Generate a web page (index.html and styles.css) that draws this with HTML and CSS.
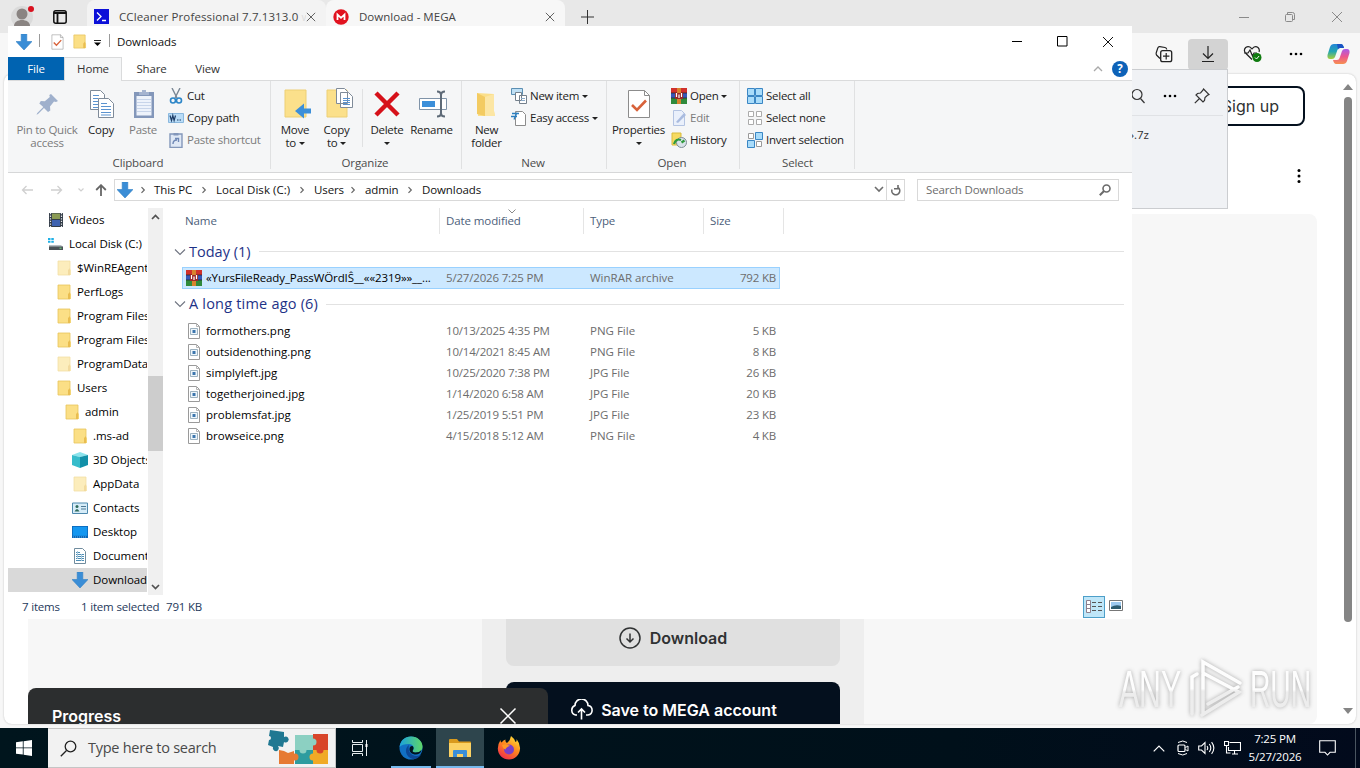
FILE: index.html
```
<!DOCTYPE html>
<html lang="en">
<head>
<meta charset="utf-8">
<title>Downloads</title>
<link rel="stylesheet" href="styles.css">
</head>
<body>

<!-- shared icons -->
<svg class="defs" width="0" height="0">
  <symbol id="folder" viewBox="0 0 16 16"><path d="M2 1h12v8l1 1v5H2z" fill="#fbdf86"/><path d="M2 1h12v14H2z" fill="none" stroke="#e8c45c" stroke-width=".8"/><path d="M12 15V10l2-2v7z" fill="#e9bd50"/></symbol>
  <symbol id="down" viewBox="0 0 16 16"><path d="M5.200 0h5.600v7.500H16L8 16 0 7.500h5.200z" fill="#3a8dd6"/><path d="M5.200 0h5.600v7.500H16L8 16 0 7.500h5.200z" fill="none" stroke="#2f7fc4" stroke-width=".6"/></symbol>
  <symbol id="rar" viewBox="0 0 16 16"><path d="M0 0h16v5H0z" fill="#d0312c"/><path d="M0 5h16v5H0z" fill="#3557b8"/><path d="M0 10h16v6H0z" fill="#2f8a3c"/><path d="M0 5h16M0 10h16" stroke="#222" stroke-width=".7"/><path d="M6 0h4v16H6z" fill="#d8842e"/><path d="M4 5h8v6H4z" fill="#9a2a2a"/><path d="M5.500 5v4M10.500 5v4M8 6.500V10" stroke="#fff" stroke-width="1.200"/></symbol>
  <symbol id="img" viewBox="0 0 12 16"><path d="M.5.5h8l3 3v12H.5z" fill="#fff" stroke="#9a9a9a"/><path d="M8.500.5v3h3" fill="none" stroke="#b5b5b5"/><path d="M2.500 5.500h7v6h-7z" fill="#eef6fb" stroke="#9db2c0"/><path d="M4.500 7h3v3h-3z" fill="#3c76ae"/></symbol>
  <symbol id="crumb" viewBox="0 0 6 8"><path d="M1.500 1.200 4.300 4 1.500 6.800" fill="none" stroke="#666" stroke-width="1.200"/></symbol>
  <symbol id="x" viewBox="0 0 12 12"><path d="M1 1l10 10M11 1 1 11" fill="none" stroke="currentColor"/></symbol>
  <symbol id="prop" viewBox="0 0 24 30"><path d="M1.500 1.500h16l5 5v22h-21z" fill="#fff" stroke="#8c8c8c"/><path d="M17.500 1.500v5h5" fill="none" stroke="#8c8c8c"/><path d="M5 16l5 5 9-9.500" fill="none" stroke="#d8623a" stroke-width="2.600"/></symbol>
  <symbol id="expand" viewBox="0 0 12 8"><path d="M1 1.500l5 5 5-5" fill="none" stroke="#6f7480" stroke-width="1.100"/></symbol>
</svg>

<div class="desktop">

  <div class="browser">
    <div class="tabstrip">
      <svg class="avatar" width="24" height="26"><circle cx="11" cy="17" r="11" fill="#dadada"/><circle cx="11" cy="14" r="5.500" fill="#8a8482"/><path d="M3 26c0-8 16-8 16 0z" fill="#8a8482"/><circle cx="20" cy="9" r="3" fill="#d9111f"/></svg>
      <svg class="panes" width="14" height="14"><rect x=".8" y=".8" width="12.400" height="12.400" rx="2" fill="none" stroke="#111" stroke-width="1.500"/><path d="M1 3h12M4.500 3v10" stroke="#111" stroke-width="1.800"/></svg>
      <div class="tab tab-back">
        <svg width="15" height="15"><path d="M0 0h15v15H0z" fill="#0c10d8"/><path d="M3 3.500l4 4-4 4M8 11.500h4" fill="none" stroke="#fff" stroke-width="1.300"/></svg>
        <span class="tab-title">CCleaner Professional 7.7.1313.0 <i>w</i></span>
        <svg class="tab-x" width="10" height="10"><use href="#x"/></svg>
      </div>
      <div class="tab">
        <svg width="16" height="16"><circle cx="8" cy="8" r="7.700" fill="#e1121f"/><path d="M4.500 11V5.500L8 8.800l3.500-3.300V11" fill="none" stroke="#fff" stroke-width="1.800"/></svg>
        <span class="tab-title">Download - MEGA</span>
        <svg class="tab-x" width="10" height="10"><use href="#x"/></svg>
      </div>
      <svg class="newtab" width="14" height="14"><path d="M6.500 0v14M0 7h13" stroke="#333"/></svg>
      <div class="wincontrols">
        <svg width="10" height="10"><path d="M0 5.500h10" stroke="#8a8a8a"/></svg>
        <svg width="10" height="10"><rect x=".5" y="2.500" width="7" height="7" rx="1" fill="none" stroke="#8a8a8a"/><path d="M2.500 2V.5h5q2 0 2 2v5H8" fill="none" stroke="#8a8a8a"/></svg>
        <svg class="grey" width="12" height="12"><use href="#x"/></svg>
      </div>
    </div>
    <div class="toolbar">
      <svg width="18" height="18"><path d="M5 13.500 1.500 10Q.8 9 1.300 7.500L2.800 3q.5-1.500 2-1.300L10 2.500q1.500.3 1.800 2" fill="none" stroke="#222" stroke-width="1.200"/><rect x="5.700" y="5.700" width="11" height="11" rx="2" fill="none" stroke="#222" stroke-width="1.300"/><path d="M11.200 8v6.400M8 11.200h6.400" stroke="#222" stroke-width="1.200"/></svg>
      <div class="dl-btn"><svg width="14" height="18"><path d="M7 1v12M2 8.500l5 5 5-5M1 16.500h12" fill="none" stroke="#222" stroke-width="1.200"/></svg></div>
      <svg width="20" height="18"><path d="M9 14.500 2.500 8q-2.300-3 .2-5.500 3-2 5.800.8l.5.500.5-.5q2.800-2.800 5.500-.8Q17 4.500 16 7M1 8h4l2-3 2.500 6L11 8h3" fill="none" stroke="#222" stroke-width="1.200"/><circle cx="14" cy="12.500" r="4.500" fill="#0f7b0f"/><path d="M12 12.500l1.500 1.500 2.600-3" fill="none" stroke="#fff"/></svg>
      <svg width="16" height="4"><circle cx="3" cy="2" r="1.300"/><circle cx="8" cy="2" r="1.300"/><circle cx="13" cy="2" r="1.300"/></svg>
      <svg class="copilot" width="23" height="20" viewBox="0 0 23 20">
        <defs><linearGradient id="cp1" x1="0" y1="0" x2="0" y2="1"><stop offset="0" stop-color="#2386d8"/><stop offset=".5" stop-color="#24a6b0"/><stop offset="1" stop-color="#a9cf3a"/></linearGradient><linearGradient id="cp2" x1="0" y1="0" x2="0" y2="1"><stop offset="0" stop-color="#a95be8"/><stop offset=".5" stop-color="#ec5790"/><stop offset="1" stop-color="#f79050"/></linearGradient></defs>
        <path d="M7 0h7q2 0 3 4h-4q-2 0-2.600 2L8 13q-.8 2-3 2H3Q0 15 .5 11L3 3q1-3 4-3z" fill="url(#cp1)"/><path d="M16 20H9q-2 0-3-4h4q2 0 2.600-2L15 7q.8-2 3-2h2q3 0 2.500 4L20 17q-1 3-4 3z" fill="url(#cp2)"/><path d="M10 0h4q2 0 3 4h-4q-1.500 0-2 1.500z" fill="#1a53c4"/></svg>
    </div>

    <div class="page">
      <div class="page-head">
        <div class="signup">Sign up</div>
        <svg class="more" width="4" height="16"><circle cx="2" cy="2.500" r="1.500"/><circle cx="2" cy="8" r="1.500"/><circle cx="2" cy="13.500" r="1.500"/></svg>
      </div>
      <div class="stage">
        <div class="card">
          <div class="mbtn mbtn-dl"><svg width="22" height="22"><circle cx="11" cy="11" r="10" fill="none" stroke="#303233" stroke-width="1.500"/><path d="M11 6.500v8.500M7.500 11.500l3.500 3.500 3.500-3.500" fill="none" stroke="#303233" stroke-width="1.500"/></svg>Download</div>
          <div class="mbtn mbtn-save"><svg width="26" height="22"><path d="M8 16H6.500a5 5 0 0 1-.5-9.500 6.500 6.500 0 0 1 13 0A4.800 4.800 0 0 1 19 16h-2M12.500 20.500v-10M9 13.500l3.500-3.500 3.500 3.500" fill="none" stroke="#fff" stroke-width="1.600"/></svg>Save to MEGA account</div>
        </div>
      </div>
      <div class="scroll">
        <svg width="10" height="6"><path d="M5 0l5 6H0z" fill="#858585"/></svg>
        <div class="scroll-thumb"></div>
        <svg width="10" height="6"><path d="M0 0h10L5 6z" fill="#858585"/></svg>
      </div>
      <div class="progress">Progress <svg width="18" height="18" viewBox="0 0 12 12"><use href="#x"/></svg></div>
    </div>

    <div class="flyout">
      <div class="flyout-head">
        <svg width="16" height="16"><circle cx="7" cy="6.500" r="5" fill="none" stroke="#333" stroke-width="1.200"/><path d="M10.500 10.500l4 4.500" stroke="#333" stroke-width="1.200"/></svg>
        <svg width="16" height="4"><circle cx="3" cy="2" r="1.300"/><circle cx="8" cy="2" r="1.300"/><circle cx="13" cy="2" r="1.300"/></svg>
        <svg width="16" height="16"><path d="M9.500 1l5.500 5.500-1.500.8-2.500 2.200-.5 3L9 14 2 7l1.500-1.500 3-.5L8.700 2.500zM5.500 10.500.8 15.200" fill="none" stroke="#333" stroke-width="1.200"/></svg>
      </div>
      <div class="flyout-file">».7z</div>
    </div>

    <svg class="watermark" width="200" height="64" viewBox="0 0 200 64">
      <defs><linearGradient id="fade" x1="0" y1="0" x2="0" y2="1"><stop offset=".5" stop-color="#fff"/><stop offset=".55" stop-color="#ececec"/></linearGradient></defs>
      <g fill="url(#fade)" font-family="Liberation Sans Narrow, Liberation Sans, sans-serif" font-size="51">
        <text x="3" y="50" textLength="62" lengthAdjust="spacingAndGlyphs">ANY</text>
        <text x="134" y="50" textLength="61" lengthAdjust="spacingAndGlyphs">RUN</text>
      </g>
      <path d="M76 57V20l5-3M87 56V5l37 21M87 16l36 19-37 23M92 47l30-17" fill="none" stroke="url(#fade)" stroke-width="3.500" stroke-linecap="round"/>
    </svg>
  </div>

  <div class="explorer">
    <div class="titlebar">
      <svg width="16" height="16"><use href="#down"/></svg>
      <span class="bar"></span>
      <svg class="q1" width="13" height="16"><use href="#prop"/></svg>
      <svg class="q2" width="15" height="17"><use href="#folder"/></svg>
      <svg class="q3" width="7" height="6"><path d="M0 .5h7" stroke="#222"/><path d="M0 2.500h7L3.500 6z"/></svg>
      <span class="bar"></span>
      <span class="caption">Downloads</span>
      <div class="capbtns">
        <svg width="11" height="11"><path d="M0 5.500h10" stroke="#000"/></svg>
        <svg width="11" height="11"><path d="M.5.500h9.500v9.500H.5z" fill="none" stroke="#000"/></svg>
        <svg width="12" height="12"><use href="#x"/></svg>
      </div>
    </div>
    <div class="rtabs">
      <span class="rtab file">File</span>
      <span class="rtab home">Home</span>
      <span class="rtab">Share</span>
      <span class="rtab">View</span>
      <svg class="fold" width="10" height="6"><path d="M1 5l4-4 4 4" fill="none" stroke="#a9a9a9" stroke-width="1.300"/></svg>
      <span class="help">?</span>
    </div>

    <div class="ribbon">
      <div class="group g-clip">
        <div class="items">
          <div class="big off"><svg width="32" height="32"><path d="M20 6l7 7-2 1-2-.5-4 5 .3 4-2.300 1.500-4-4L7 26l-1.500.8L6.300 25l6-6-4-3.500L9.800 13l4 .3 5-4.300-.5-2z" fill="#9fb0cc"/></svg>Pin to Quick<br>access</div>
          <div class="big"><svg width="32" height="32"><g fill="#fff" stroke="#7f8b99"><path d="M5.500 2.500h10l4 4v15h-14z"/><path d="M13.500 10.500h10l5 5v14h-15z"/></g><path d="M8 7.500h6M8 10.500h5M8 13.500h5M8 16.500h5M8 19.500h5M16 15.500h6M16 18.500h10M16 21.500h10M16 24.500h10M16 27h10" stroke="#5b93cf"/></svg>Copy</div>
          <div class="big off"><svg width="32" height="32"><path d="M7 4h20v26H7z" fill="#8397ba"/><path d="M9.500 8h15v19.500h-15z" fill="#eef3fb"/><path d="M12 7V4h3V2h4v2h3v3z" fill="#a5b4d0"/><path d="M10 11.500h14M10 14.500h14M10 17.500h14M10 20.500h14M10 23.500h14" stroke="#c8d5ea"/></svg>Paste</div>
          <div class="smalls">
            <div class="small"><svg width="16" height="16"><path d="M4 0l5 10M12 0 7 10" stroke="#7a8794" stroke-width="1.400"/><circle cx="5" cy="12.500" r="2.500" fill="none" stroke="#2c86c8" stroke-width="1.600"/><circle cx="11" cy="12.500" r="2.500" fill="none" stroke="#2c86c8" stroke-width="1.600"/></svg>Cut</div>
            <div class="small"><svg width="16" height="16"><path d="M.5 3.500h15v9H.5z" fill="#b9dcf7" stroke="#8ab8de"/><path d="M2 5.500l1.500 5 1.300-5 1.300 5 1.400-5M9 10h1.500M11.500 10H13" fill="none" stroke="#1d3c66" stroke-width="1.200"/></svg>Copy path</div>
            <div class="small off"><svg width="16" height="16"><path d="M2 2h12v13.500H2z" fill="#dfe8f5" stroke="#8397ba" stroke-width="1.400"/><path d="M5.500 1h5v2.500h-5z" fill="#8397ba"/><path d="M5 12q0-4 4-4M7 6.500h3.500V10" fill="none" stroke="#6f88b5" stroke-width="1.400"/></svg>Paste shortcut</div>
          </div>
        </div>
        <div class="glabel">Clipboard</div>
      </div>
      <div class="group g-org">
        <div class="items">
          <div class="big"><svg width="32" height="32"><path d="M6 2h21v27H6z" fill="#fbe08b"/><path d="M6 2h21v27H6z" fill="none" stroke="#edcf74" /><path d="M32 20.500v5h-7v5L16 23l9-7.500v5z" fill="#3c8fd9"/></svg>Move<br>to <i class="dd"></i></div>
          <div class="big"><svg width="32" height="32"><path d="M6 2h20v27H6z" fill="#fbe08b" stroke="#edcf74"/><path d="M15.500.5h8l3 3v12h-11zM19.500 4.500h8l4 4v11h-12z" fill="#fff" stroke="#7f8b99"/><path d="M22 10.500h7M22 12.500h7M22 14.500h7M22 16.500h7" stroke="#5b93cf"/></svg>Copy<br>to <i class="dd"></i></div>
          <span class="vsep"></span>
          <div class="big"><svg width="32" height="32"><path d="M5 5l22 22M27 5 5 27" stroke="#d6111a" stroke-width="4.500"/></svg>Delete<br><i class="dd"></i></div>
          <div class="big"><svg width="32" height="32"><path d="M3.500 10.500h27v11h-27z" fill="#fff" stroke="#7f93a8"/><path d="M6 13h13v6H6z" fill="#3c8fd9"/><path d="M21 3.500q4 0 4 3.500v18q0 3.500-4 3.500M29 3.500q-4 0-4 3.500M29 28.500q-4 0-4-3.500" fill="none" stroke="#5f6b78" stroke-width="2"/></svg>Rename</div>
        </div>
        <div class="glabel">Organize</div>
      </div>
      <div class="group g-new">
        <div class="items">
          <div class="big"><svg width="32" height="32"><path d="M6 5l17 1v17l1 5H7z" fill="#fbdf8a"/><path d="M6 5l8 4v19L6 26z" fill="#f3cb62"/><path d="M14 9l9-3v17l1 5H14z" fill="#fce6a4"/></svg>New<br>folder</div>
          <div class="smalls">
            <div class="small"><svg width="16" height="16"><path d="M.5.500h11v6H.5z" fill="#bfe0f5" stroke="#5b8fb3"/><path d="M4.500 4.500h6v8h-6zM8.500 7.500h7v8h-7z" fill="#fff" stroke="#74808c"/><path d="M10 10.500h4M10 12.500h4" stroke="#8aa9c8"/></svg>New item <i class="dd"></i></div>
            <div class="small"><svg width="16" height="16"><path d="M4.500 1.500h7l3 3v11h-10z" fill="#fff" stroke="#8c8c8c"/><path d="M1 3.500h7M0 6.500h6M3 9.500l3-7" stroke="#2c7fc0" stroke-width="1.300"/></svg>Easy access <i class="dd"></i></div>
          </div>
        </div>
        <div class="glabel">New</div>
      </div>
      <div class="group g-open">
        <div class="items">
          <div class="big"><svg width="32" height="32"><use href="#prop" x="4" y="1" width="24" height="30"/></svg>Properties<br><i class="dd"></i></div>
          <div class="smalls">
            <div class="small"><svg width="16" height="16"><use href="#rar"/></svg>Open <i class="dd"></i></div>
            <div class="small off"><svg width="16" height="16"><path d="M2.500.5h8l3 3v12h-11z" fill="#eaf0fb" stroke="#b4c4e2"/><path d="M5 12l8-9 2 2-8 8z" fill="#a9bbdf"/></svg>Edit</div>
            <div class="small"><svg width="16" height="16"><path d="M1 1h9v12H1z" fill="#f6da62" stroke="#d8bb3c"/><circle cx="10.500" cy="10.500" r="5" fill="#d9e3ea" stroke="#7d8a95"/><path d="M3 12q2-6 7-4M10.500 10.500l3-2" fill="none" stroke="#2f9a3d" stroke-width="2.200"/></svg>History</div>
          </div>
        </div>
        <div class="glabel">Open</div>
      </div>
      <div class="group g-sel">
        <div class="items">
          <div class="smalls">
            <div class="small"><svg width="16" height="16"><path d="M.5.500h7v7h-7zM8.500.500h7v7h-7zM.5 8.500h7v7h-7zM8.500 8.500h7v7h-7z" fill="#a9dcfa" stroke="#3a86c4"/></svg>Select all</div>
            <div class="small"><svg width="16" height="16"><path d="M1.500 1.500h5v5h-5zM9.500 1.500h5v5h-5zM1.500 9.500h5v5h-5zM9.500 9.500h5v5h-5z" fill="#fff" stroke="#ababab"/></svg>Select none</div>
            <div class="small"><svg width="16" height="16"><path d="M1.500 1.500h5v5h-5zM9.500 9.500h5v5h-5z" fill="#fff" stroke="#9a9a9a"/><path d="M8.500.500h7v7h-7zM.5 8.500h7v7h-7z" fill="#a9dcfa" stroke="#3a86c4"/></svg>Invert selection</div>
          </div>
        </div>
        <div class="glabel">Select</div>
      </div>
    </div>

    <div class="nav">
      <svg class="n-back" width="12" height="10"><path d="M12 5H1.500M5.500 1l-4 4 4 4" fill="none" stroke="#d0d0d0" stroke-width="1.300"/></svg>
      <svg class="n-fwd" width="12" height="10"><path d="M0 5h10.500M6.500 1l4 4-4 4" fill="none" stroke="#d0d0d0" stroke-width="1.300"/></svg>
      <svg class="n-rec" width="6" height="4"><path d="M.5.500 3 3 5.500.5" fill="none" stroke="#d0d0d0" stroke-width="1.200"/></svg>
      <svg class="n-up" width="12" height="12"><path d="M6 12V1.500M1.200 6 6 1.200 10.800 6" fill="none" stroke="#666" stroke-width="1.800"/></svg>
      <div class="address">
        <svg width="16" height="16"><use href="#down"/></svg>
        <svg class="cr cr0" width="6" height="8"><use href="#crumb"/></svg>
        <span class="c1">This PC</span><svg class="cr" width="6" height="8"><use href="#crumb"/></svg>
        <span class="c2">Local Disk (C:)</span><svg class="cr" width="6" height="8"><use href="#crumb"/></svg>
        <span class="c3">Users</span><svg class="cr" width="6" height="8"><use href="#crumb"/></svg>
        <span class="c4">admin</span><svg class="cr" width="6" height="8"><use href="#crumb"/></svg>
        <span>Downloads</span>
        <svg class="a-drop" width="10" height="7"><path d="M1 1l4 4 4-4" fill="none" stroke="#6e6e6e" stroke-width="1.600"/></svg>
        <div class="refresh"><svg width="11" height="12"><path d="M2 5a4 4 0 1 0 5.500-2.300M8 .5v3.800H4" fill="none" stroke="#6b6b6b" stroke-width="1.600" transform="translate(0 .5)"/></svg></div>
      </div>
      <div class="searchbox">Search Downloads <svg width="12" height="12"><circle cx="7.500" cy="4.500" r="3.500" fill="none" stroke="#6b6b6b" stroke-width="1.600"/><path d="M5 7 .8 11.200" stroke="#6b6b6b" stroke-width="2"/></svg></div>
    </div>

    <div class="body">
      <div class="tree">
        <div class="node l0"><svg width="16" height="16"><path d="M1 1h14v14H1z" fill="#333c48"/><path d="M4 1.500h8V7H4z" fill="#8a9a54"/><path d="M4 8h8v6H4z" fill="#3e62b0"/><path d="M2.500 1v14M13.500 1v14" stroke="#e4e7ea" stroke-width="1.200" stroke-dasharray="1.300 1.300"/></svg>Videos</div>
        <div class="node l0"><svg width="16" height="16"><path d="M0 2h2.500v2H0zM3.300 2h2.500v2H3.300zM0 4.800h2.500v2H0zM3.300 4.800h2.500v2H3.300z" fill="#1eb0e6"/><path d="M1 9h12l2 2H1z" fill="#b6bdc2"/><path d="M1 10.500h14V14H1z" fill="#4b5257"/><path d="M11.500 12.200h2" stroke="#6fe07c"/></svg>Local Disk (C:)</div>
        <div class="node l1"><svg class="pale" width="16" height="16"><use href="#folder"/></svg>$WinREAgent</div>
        <div class="node l1"><svg width="16" height="16"><use href="#folder"/></svg>PerfLogs</div>
        <div class="node l1"><svg width="16" height="16"><use href="#folder"/></svg>Program Files</div>
        <div class="node l1"><svg width="16" height="16"><use href="#folder"/></svg>Program Files (x86)</div>
        <div class="node l1"><svg class="pale" width="16" height="16"><use href="#folder"/></svg>ProgramData</div>
        <div class="node l1"><svg width="16" height="16"><use href="#folder"/></svg>Users</div>
        <div class="node l2"><svg width="16" height="16"><use href="#folder"/></svg>admin</div>
        <div class="node l3"><svg width="16" height="16"><use href="#folder"/></svg>.ms-ad</div>
        <div class="node l3"><svg width="16" height="16"><path d="M0 3l8-3 8 3-8 2z" fill="#8be3ec"/><path d="M0 3l8 2v11l-8-3z" fill="#36bccb"/><path d="M16 3 8 5v11l8-3z" fill="#1290a8"/></svg>3D Objects</div>
        <div class="node l3"><svg class="pale" width="16" height="16"><use href="#folder"/></svg>AppData</div>
        <div class="node l3"><svg width="16" height="16"><path d="M.5 3h15v10.500H.5z" fill="#d6ecf8" stroke="#4d88ad"/><circle cx="5" cy="6.500" r="1.500" fill="#2f6a5c"/><path d="M2.500 11.500q2.500-5 5 0z" fill="#2f6a5c"/><path d="M9 6.500h5M9 9h5" stroke="#4d7894"/></svg>Contacts</div>
        <div class="node l3"><svg width="16" height="16"><path d="M0 2h16v12H0z" fill="#0a66b8"/><path d="M.8 2.800h14.400v9H.8z" fill="#1597f0"/><path d="M1 13h14" stroke="#5db4ee" stroke-dasharray="1 1"/></svg>Desktop</div>
        <div class="node l3"><svg width="16" height="16"><path d="M2.500.5h8l3 3v12h-11z" fill="#fff" stroke="#708c9e"/><path d="M4 4.500h4M4 6.500h8M4 8.500h8M4 10.500h8M4 12.500h8" stroke="#4d8db5"/><path d="M5.500 3v8M9.500 6v7" stroke="#a6c8dc"/></svg>Documents</div>
        <div class="node l3 sel"><svg width="16" height="16"><use href="#down"/></svg>Downloads</div>
      </div>
      <div class="vscroll">
        <svg width="9" height="6"><path d="M1 5l3.500-3.500L8 5" fill="none" stroke="#505050" stroke-width="1.700"/></svg>
        <div class="vthumb"></div>
        <svg width="9" height="6"><path d="M1 1l3.500 3.500L8 1" fill="none" stroke="#505050" stroke-width="1.700"/></svg>
      </div>
      <div class="files">
        <div class="cols">
          <span>Name</span><span>Date modified<svg class="sort" width="8" height="5"><path d="M.5.500 4 4 7.500.5" fill="none" stroke="#8a8a8a"/></svg></span><span>Type</span><span>Size</span>
        </div>
        <div class="fgroup"><svg width="12" height="8"><use href="#expand"/></svg>Today (1)</div>
        <div class="row picked"><svg width="16" height="16"><use href="#rar"/></svg><span class="fname">«YursFileReady_PassWÖrdIŜ__««2319»»__...</span><span>5/27/2026 7:25 PM</span><span>WinRAR archive</span><span>792 KB</span></div>
        <div class="fgroup older"><svg width="12" height="8"><use href="#expand"/></svg>A long time ago (6)</div>
        <div class="row"><svg width="12" height="16"><use href="#img"/></svg><span class="fname">formothers.png</span><span>10/13/2025 4:35 PM</span><span>PNG File</span><span>5 KB</span></div>
        <div class="row"><svg width="12" height="16"><use href="#img"/></svg><span class="fname">outsidenothing.png</span><span>10/14/2021 8:45 AM</span><span>PNG File</span><span>8 KB</span></div>
        <div class="row"><svg width="12" height="16"><use href="#img"/></svg><span class="fname">simplyleft.jpg</span><span>10/25/2020 7:38 PM</span><span>JPG File</span><span>26 KB</span></div>
        <div class="row"><svg width="12" height="16"><use href="#img"/></svg><span class="fname">togetherjoined.jpg</span><span>1/14/2020 6:58 AM</span><span>JPG File</span><span>20 KB</span></div>
        <div class="row"><svg width="12" height="16"><use href="#img"/></svg><span class="fname">problemsfat.jpg</span><span>1/25/2019 5:51 PM</span><span>JPG File</span><span>23 KB</span></div>
        <div class="row"><svg width="12" height="16"><use href="#img"/></svg><span class="fname">browseice.png</span><span>4/15/2018 5:12 AM</span><span>PNG File</span><span>4 KB</span></div>
      </div>
    </div>
    <div class="status">
      <span class="s1">7 items</span><span class="s2">1 item selected</span><span>791 KB</span>
      <span class="view on"><svg width="16" height="14"><path d="M.5.500h4v12h-4zM.5 4.500h4M.5 8.500h4" fill="#fff" stroke="#8d7f8d"/><path d="M6 2.500h4M12 2.500h4M6 6.500h4M12 6.500h4M6 10.500h4M12 10.500h4" stroke="#555"/></svg></span>
      <span class="view"><svg width="14" height="11"><path d="M.5.500h13v10H.5z" fill="#fff" stroke="#777"/><path d="M2 2h10v7H2z" fill="#9cc8ee"/><path d="M2 7q5-3 10-1v3H2z" fill="#2c5a6e"/></svg></span>
    </div>
  </div>

  <div class="taskbar">
    <svg class="start" width="16" height="16"><path d="M0 2.200 6.800 1.300v6.200H0zM7.600 1.200 16 0v7.500H7.600zM0 8.300h6.800v6.300L0 13.700zM7.600 8.300H16V16l-8.400-1.200z" fill="#fff"/></svg>
    <div class="tsearch">
      <svg width="17" height="17"><circle cx="10.500" cy="6.500" r="5.300" fill="none" stroke="#222" stroke-width="1.300"/><path d="M6.500 10.500.8 16.200" stroke="#222" stroke-width="1.300"/></svg>
      <span>Type here to search</span>
      <svg class="puzzle" width="64" height="38">
        <path d="M13 21l5 1 4 2 6-2v13H13z" fill="#e67a33"/>
        <path d="M29 6h18v15H29z" fill="#8cd0c2"/><path d="M47 5h15v16H47z" fill="#d8452a"/>
        <path d="M29 21h18v14H29z" fill="#2d9c9f"/><path d="M47 21h15v14H47z" fill="#f0aa26"/>
        <circle cx="37" cy="21" r="3.500" fill="#8cd0c2"/><circle cx="47" cy="13" r="3.500" fill="#8cd0c2"/><circle cx="54" cy="21" r="3.500" fill="#d8452a"/><circle cx="47" cy="28" r="3.500" fill="#f0aa26"/><circle cx="29" cy="28" r="3.500" fill="#e67a33"/>
        <path d="M4 1l14 2 0 5a3 3 0 1 1 0 5l-1 5-5-1a3 3 0 1 1-5 1l-5-2 1-5a2 2 0 0 0 0-4z" fill="#207892"/>
      </svg>
    </div>
    <div class="tbtn"><svg width="16" height="16"><path d="M.5 0v2.500h10V0M.5 16v-2.500h10V16M.5 4.500h10v7H.5zM14.500 0v4M14.500 7v9" fill="none" stroke="#e8eef0"/><path d="M13.500 4h2v3h-2z" fill="#fff"/></svg></div>
    <div class="tbtn run"><svg width="24" height="24">
      <defs><linearGradient id="ed" x1="0" y1="0" x2="1" y2="0"><stop offset="0" stop-color="#1ba2dc"/><stop offset="1" stop-color="#5fd668"/></linearGradient></defs>
      <circle cx="12" cy="12" r="11.500" fill="#1170c4"/><path d="M.6 11C1.500 4 6 .5 12 .5 19 .5 23.500 5.500 23.500 10.500c0 4-3 6-7 6-3 0-4-1-2.500-2.500 2-2.500-.5-6-4-6-4.500 0-8 1-9.400 3z" fill="url(#ed)"/><path d="M10 9c-5 3-4 12 4 14 3 .3 6-1.500 8-4-8 3-14-2-12-10z" fill="#0c4796"/><path d="M11 11c3-3 4.500 1 3 3-1 1.600 0 2.500 2.500 2.500q4 0 6-2.500c-1 4-4 5-7 4.500-4-.8-6-4-4.500-7.500z" fill="#00141d"/></svg></div>
    <div class="tbtn run cur"><svg width="24" height="20"><path d="M1 2q0-1 1-1h7l2 2.500h11q1 0 1 1V19H1z" fill="#d99a1d"/><path d="M1 5h22v14H1z" fill="#fbd264"/><path d="M5 19v-6q0-1 1-1h12q1 0 1 1v6h-4v-3H9v3z" fill="#3a8fd8"/></svg></div>
    <div class="tbtn"><svg width="24" height="24">
      <defs><linearGradient id="ff" x1=".8" y1="0" x2=".2" y2="1"><stop offset="0" stop-color="#ffe23a"/><stop offset=".45" stop-color="#ff8a1e"/><stop offset="1" stop-color="#f0264e"/></linearGradient></defs>
      <path d="M14 0q4 3 4.500 6 1.500-.5 1-3 4 5 3.500 10c-.5 6-5 10.500-11 10.500S.8 19 .8 12.500Q.8 8 3.500 4q0 2 1 2.500Q6.500 4 8.500 3.500 8 6 10 7q3-2 4-7z" fill="url(#ff)"/><circle cx="12" cy="13.500" r="5" fill="#7a3fc8"/><path d="M5 9q4-2 8 1-4 1-4.500 3.500Q6 13 5 9z" fill="#ff9a24"/></svg></div>
    <div class="tray">
      <svg width="12" height="7"><path d="M.7 6.300 6 1l5.300 5.300" fill="none" stroke="#fff" stroke-width="1.200"/></svg>
      <svg width="12" height="16"><path d="M1 2.500q5-3 9 0M1 13.500q5 3 9 0" fill="none" stroke="#fff"/><rect x="1" y="5" width="7" height="6.500" rx="1" fill="none" stroke="#fff" stroke-width="1.200"/><path d="M8.500 7.500l2.500-1.500v5L8.500 9.500" fill="none" stroke="#fff"/></svg>
      <svg width="17" height="14"><path d="M.7 5h2.800L7 1.500v11L3.500 9H.7zM9 5q1.500 2 0 4M11.300 3q3 4 0 8M13.600 1.200q4.500 6 0 11.600" fill="none" stroke="#fff" stroke-width="1.100"/></svg>
      <svg width="17" height="14"><path d="M5.500 1.500h11v8h-12V6M8 13h6M10.500 10v3M.5.500h4v4h-4zM2.500 5v7h4" fill="none" stroke="#fff" stroke-width="1.100"/></svg>
      <div class="clock">7:25 PM<br>5/27/2026</div>
      <svg width="17" height="16"><path d="M.7.700h15.600v11.600H11L8.500 15 6 12.300H.7z" fill="none" stroke="#fff" stroke-width="1.100"/></svg>
    </div>
  </div>
</div>
</body>
</html>
```
FILE: styles.css
```
body { margin: 0; overflow: hidden; }
svg { display: block; flex: none; }
.defs { position: absolute; }

.desktop {
    position: relative;
    width: 1360px; height: 768px;
    overflow: hidden;
    font: 11.5px/16px "Open Sans", "Noto Sans", sans-serif;
    letter-spacing: -0.18px;
    color: #111;
    display: flex;
    flex-direction: column;
}

/* browser behind */
.browser {
    position: relative;
    height: 728px;
    background: #f7f7f7;
    display: flex;
    flex-direction: column;
}
.tabstrip {
    height: 33px;
    background: #e8e8e8;
    display: flex;
    align-items: center;
    color: #444;
}
.avatar { margin-left: 11px; align-self: flex-start; }
.panes { margin-left: 18px; margin-right: 20px; }
.tab {
    box-sizing: border-box;
    width: 239px; height: 33px;
    padding: 0 10px 0 7px;
    background: #f7f7f7;
    border-radius: 8px 8px 0 0;
    display: flex;
    align-items: center;
}
.tab-back { padding-right: 10px; background: #f3f3f3; }
.tab-title { margin-left: 10px; flex: 1; white-space: nowrap; overflow: hidden; letter-spacing: 0.02px; }
.tab-back .tab-title { letter-spacing: 0.12px; }
.tab-title i { color: #ddd; font-style: normal; }
.newtab { margin-left: 16px; }
.wincontrols { margin-left: auto; margin-right: 17px; display: flex; align-items: center; gap: 36px; }
.grey { color: #8a8a8a; }
.toolbar {
    height: 41px;
    padding: 0 10px 0 0;
    display: flex;
    align-items: center;
    justify-content: flex-end;
}
.dl-btn { width: 40px; height: 31px; margin: 1px 15px 0 15px; background: #d3d3d3; border-radius: 4px; display: flex; align-items: center; justify-content: center; }
.toolbar > svg:nth-child(4) { margin: 0 23px 0 25px; }
.page {
    position: relative;
    height: 650px;
    margin: 0 4px;
    background: #fff;
    border-radius: 8px;
    box-shadow: 0 0 2px #bbb;
    overflow: hidden;
}
.page-head { height: 140px; display: flex; justify-content: flex-end; }
.signup {
    box-sizing: border-box;
    width: 113px; height: 40px;
    margin: 12px 0 0;
    padding-right: 24px;
    border: 2px solid #04101e;
    border-radius: 8px;
    font: 16px/37px Inter, sans-serif;
    letter-spacing: 0;
    text-align: right;
    color: #303233;
}
.more { margin: 94px 55px 0 -8px; }
.stage {
    height: 510px;
    margin: 0 39px 0 24px;
    background: #f7f7f7;
    border-radius: 8px;
    display: flex;
}
.card { width: 334px; padding: 404px 24px 0; margin-left: 454px; background: #eee; }
.mbtn {
    height: 56px;
    border-radius: 8px;
    font: 600 16px/56px Inter, sans-serif;
    letter-spacing: 0;
    display: flex;
    align-items: center;
    justify-content: center;
    gap: 9px;
}
.mbtn-dl { margin-top: -8px; background: #e0e0e0; color: #303233; }
.mbtn-save { margin-top: 16px; background: #04101e; color: #fff; gap: 6px; }
.scroll {
    position: absolute;
    top: 10px; right: 3px; bottom: 10px;
    width: 10px;
    display: flex;
    flex-direction: column;
    align-items: center;
    justify-content: space-between;
}
.scroll-thumb { width: 8px; height: 525px; margin-bottom: 79px; border-radius: 4px; background: #858585; }
.progress {
    position: absolute;
    left: 24px; top: 614px;
    box-sizing: border-box;
    width: 520px; height: 56px;
    padding: 0 31px 0 24px;
    background: #2c2e2f;
    border-radius: 8px;
    color: #fff;
    font: 600 16px/56px Inter, sans-serif;
    letter-spacing: 0;
    display: flex;
    align-items: center;
    justify-content: space-between;
}
.flyout {
    position: absolute;
    left: 1000px; top: 69px;
    width: 227px; height: 138px;
    background: #f0f2f5;
    border: 1px solid #cbcdd0;
    border-left: 0;
}
.flyout-head {
    height: 45px;
    margin-right: 4px;
    padding-right: 13px;
    border-bottom: 1px solid #e0e2e5;
    display: flex;
    align-items: center;
    justify-content: flex-end;
    gap: 16px;
}
.flyout-head svg { margin-top: 6px; }
.flyout-file { margin: 11px 78px 0 0; text-align: right; color: #333; letter-spacing: 0; }
.watermark { position: absolute; left: 1116px; top: 657px; opacity: .85; filter: drop-shadow(0 0 2px #999); }

/* explorer window */
.explorer {
    position: absolute;
    left: 8px; top: 26px;
    width: 1124px; height: 593px;
    background: #fff;
    display: flex;
    flex-direction: column;
}
.titlebar { height: 31px; padding-left: 8px; display: flex; align-items: center; }
.bar { width: 1px; height: 13px; margin: 0 0 2px 7px; background: #9a9a9a; }
.q1 { margin-left: 11px; }
.q2 { margin-left: 8px; }
.q3 { margin: 2px 1px 0 7px; }
.caption { margin-left: 7px; letter-spacing: -0.07px; }
.capbtns { margin-left: auto; margin-right: 18px; display: flex; align-items: center; gap: 34px; }
.rtabs { height: 23px; border-bottom: 1px solid #dadbdc; display: flex; align-items: center; }
.rtab { height: 23px; line-height: 24px; width: 56px; text-align: center; color: #333; }
.rtab.file { background: #0063b1; color: #fff; }
.rtab.home { height: 24px; background: #f5f6f7; border: solid #dadbdc; border-width: 1px 1px 0; box-sizing: border-box; width: 58px; line-height: 22px; position: relative; top: .5px; }
.rtab.home + .rtab { width: 59px; }
.rtab.home + .rtab + .rtab { width: 53px; }
.fold { margin-left: auto; }
.help { width: 16px; height: 16px; margin: 0 4px 0 9px; border-radius: 8px; background: #0d62b8; color: #fff; font-weight: 700; text-align: center; }

.ribbon { height: 91px; background: #f5f6f7; border-bottom: 1px solid #d6d7d8; display: flex; letter-spacing: -0.26px; }
.group { box-sizing: border-box; padding: 4px 0 0 4px; border-right: 1px solid #e0e1e2; margin-bottom: 3px; }
.g-clip { width: 263px; }
.g-org { width: 191px; }
.g-new { width: 145px; }
.g-open { width: 133px; }
.g-sel { width: 115px; padding-left: 7px; }
.items { display: flex; height: 70px; }
.glabel { text-align: center; color: #4c4c4c; line-height: 16px; margin-left: -6px; letter-spacing: -0.15px; }
.big { padding-top: 3px; line-height: 13px; text-align: center; white-space: nowrap; color: #222; }
.big svg { margin: 0 auto 3px; }
.off { color: #7b7b7b; }
.big:nth-child(1) { width: 70px; }
.big:nth-child(2) { width: 38px; }
.big:nth-child(3) { width: 46px; }
.g-org .big:nth-child(1) { width: 40px; }
.g-org .big:nth-child(2) { width: 43px; }
.g-org .big:nth-child(4) { width: 44px; }
.g-org .big:nth-child(5) { width: 45px; }
.g-new .big:nth-child(1) { width: 41px; }
.g-open .big:nth-child(1) { width: 55px; }
.vsep { width: 1px; height: 58px; margin: 4px 2px 0 4px; background: #e0e1e2; }
.dd { display: inline-block; border: 3px solid transparent; border-top-color: #222; border-bottom: 0; vertical-align: 2px; }
.smalls { margin-left: 2px; }
.g-new .smalls { margin-left: 4px; }
.g-open .smalls { margin-left: 5px; }
.g-sel .smalls { margin-left: 0; }
.small { height: 22px; display: flex; align-items: center; gap: 3px; white-space: nowrap; color: #222; }
.small.off { color: #7b7b7b; }

.nav { box-sizing: border-box; height: 35px; padding-bottom: 2px; display: flex; align-items: center; }
.n-back { margin-left: 13px; }
.n-fwd { margin-left: 18px; }
.n-rec { margin-left: 15px; }
.n-up { margin-left: 11px; margin-right: 7px; }
.address {
    box-sizing: border-box;
    width: 791px; height: 22px;
    padding-left: 2px;
    border: 1px solid #d9d9d9;
    display: flex;
    align-items: center;
    letter-spacing: -0.1px;
}
.cr { margin: 0 9px 0 7px; }
.cr0 { margin-right: 8px; }
.c1, .c2, .c3, .c4 { white-space: nowrap; }
.c1 { width: 40px; }
.c2 { width: 76px; letter-spacing: 0.05px; }
.c3 { width: 29px; }
.c4 { width: 35px; }
.a-drop { margin-left: auto; margin-right: 2px; }
.refresh { width: 17px; height: 20px; border-left: 1px solid #d9d9d9; display: flex; align-items: center; justify-content: center; }
.searchbox {
    box-sizing: border-box;
    width: 202px; height: 22px;
    margin-left: 12px;
    padding: 0 7px 0 8px;
    border: 1px solid #d9d9d9;
    color: #6d6d6d;
    letter-spacing: -0.12px;
    display: flex;
    align-items: center;
    justify-content: space-between;
}

.body { height: 387px; display: flex; }
.tree { width: 139px; overflow: hidden; letter-spacing: -0.05px; }
.node { height: 24px; display: flex; align-items: center; gap: 5px; white-space: nowrap; color: #000; }
.node.sel { background: #d9d9d9; }
.l0 { padding-left: 40px; }
.l1 { padding-left: 48px; }
.l2 { padding-left: 56px; }
.l3 { padding-left: 64px; }
.pale { opacity: .55; }
.vscroll {
    box-sizing: border-box;
    width: 15px;
    margin-left: 1px;
    padding: 6px 0 5px;
    background: #f0f0f0;
    display: flex;
    flex-direction: column;
    align-items: center;
    justify-content: space-between;
}
.vthumb { width: 15px; height: 75px; margin-top: 22px; background: #cdcdcd; }
.files { width: 969px; }
.cols { height: 26px; margin-bottom: 1px; line-height: 26px; display: flex; color: #4c607a; letter-spacing: -0.1px; }
.cols span { box-sizing: border-box; padding-left: 6px; border-right: 1px solid #e5e5e5; width: 144px; position: relative; }
.cols span:nth-child(1) { width: 277px; padding-left: 22px; }
.cols span:nth-child(3) { width: 120px; }
.cols span:nth-child(4) { width: 80px; }
.sort { position: absolute; left: 68px; top: 1px; }
.fgroup {
    height: 33px;
    padding: 0 8px 0 11px;
    display: flex;
    align-items: center;
    gap: 3px;
    font-size: 14.500px;
    letter-spacing: 0;
    color: #1e3287;
}
.older { height: 32px; letter-spacing: 0.2px; }
.fgroup::after { content: ""; flex: 1; height: 1px; margin-left: 5px; background: #e2e2e2; }
.row {
    height: 21px;
    margin-left: 19px;
    padding-left: 6px;
    width: 592px;
    display: flex;
    align-items: center;
    color: #6d6d6d;
}
.row span { width: 144px; white-space: nowrap; }
.row .fname { width: 240px; margin-left: 6px; color: #000; letter-spacing: 0; }
.row span:nth-of-type(3) { width: 120px; letter-spacing: 0; }
.row span:nth-of-type(4) { width: 66px; text-align: right; }
.picked { box-sizing: border-box; width: 598px; height: 22px; padding-left: 3px; margin-top: -1px; margin-bottom: -1px; background: #cce8ff; border: 1px solid #99d1ff; }
.picked .fname { margin-left: 4px; letter-spacing: -0.1px; }
.status { height: 24px; display: flex; align-items: center; color: #1e395b; padding-left: 14px; }
.s1 { width: 59px; }
.s2 { width: 85px; }
.view { width: 22px; height: 22px; box-sizing: border-box; display: flex; align-items: center; justify-content: center; }
.view.on { margin-left: auto; background: #bfe6f8; border: 1px solid #4d9fc9; }
.view:last-child { margin: 0 5px 3px 0; }

.taskbar {
    height: 40px;
    background: linear-gradient(90deg, #00151d, #00101a 70%, #020a1c);
    display: flex;
    align-items: center;
    color: #fff;
}
.start { margin: 0 16px; }
.tsearch {
    box-sizing: border-box;
    width: 288px; height: 40px;
    padding-left: 12px;
    background: #f2f2f2;
    border: 1px solid #c5c5c5;
    border-left: 0;
    display: flex;
    align-items: center;
    color: #4a4a4a;
    font-size: 14.500px;
}
.tsearch span { margin-left: 11px; letter-spacing: -0.26px; }
.puzzle { margin-left: auto; margin-right: 5px; }
.tbtn { box-sizing: border-box; width: 48px; height: 40px; margin-right: 1px; display: flex; align-items: center; justify-content: center; }
.run { box-shadow: inset 0 -2px #76b9ed; width: 40px; margin: 0 5px 0 6px; }
.cur { background: #2e454d; width: 48px; margin: 0 1px 0 0; }
.tray { margin-left: auto; margin-right: 4px; padding-right: 19px; height: 40px; border-right: 1px solid #4a5560; display: flex; align-items: center; gap: 9px; }
.tray > svg:first-child { margin-right: 3px; }
.clock { width: 62px; margin-left: -6px; text-align: center; line-height: 18px; }
.tray > svg:last-child { margin-left: 4px; }
```
